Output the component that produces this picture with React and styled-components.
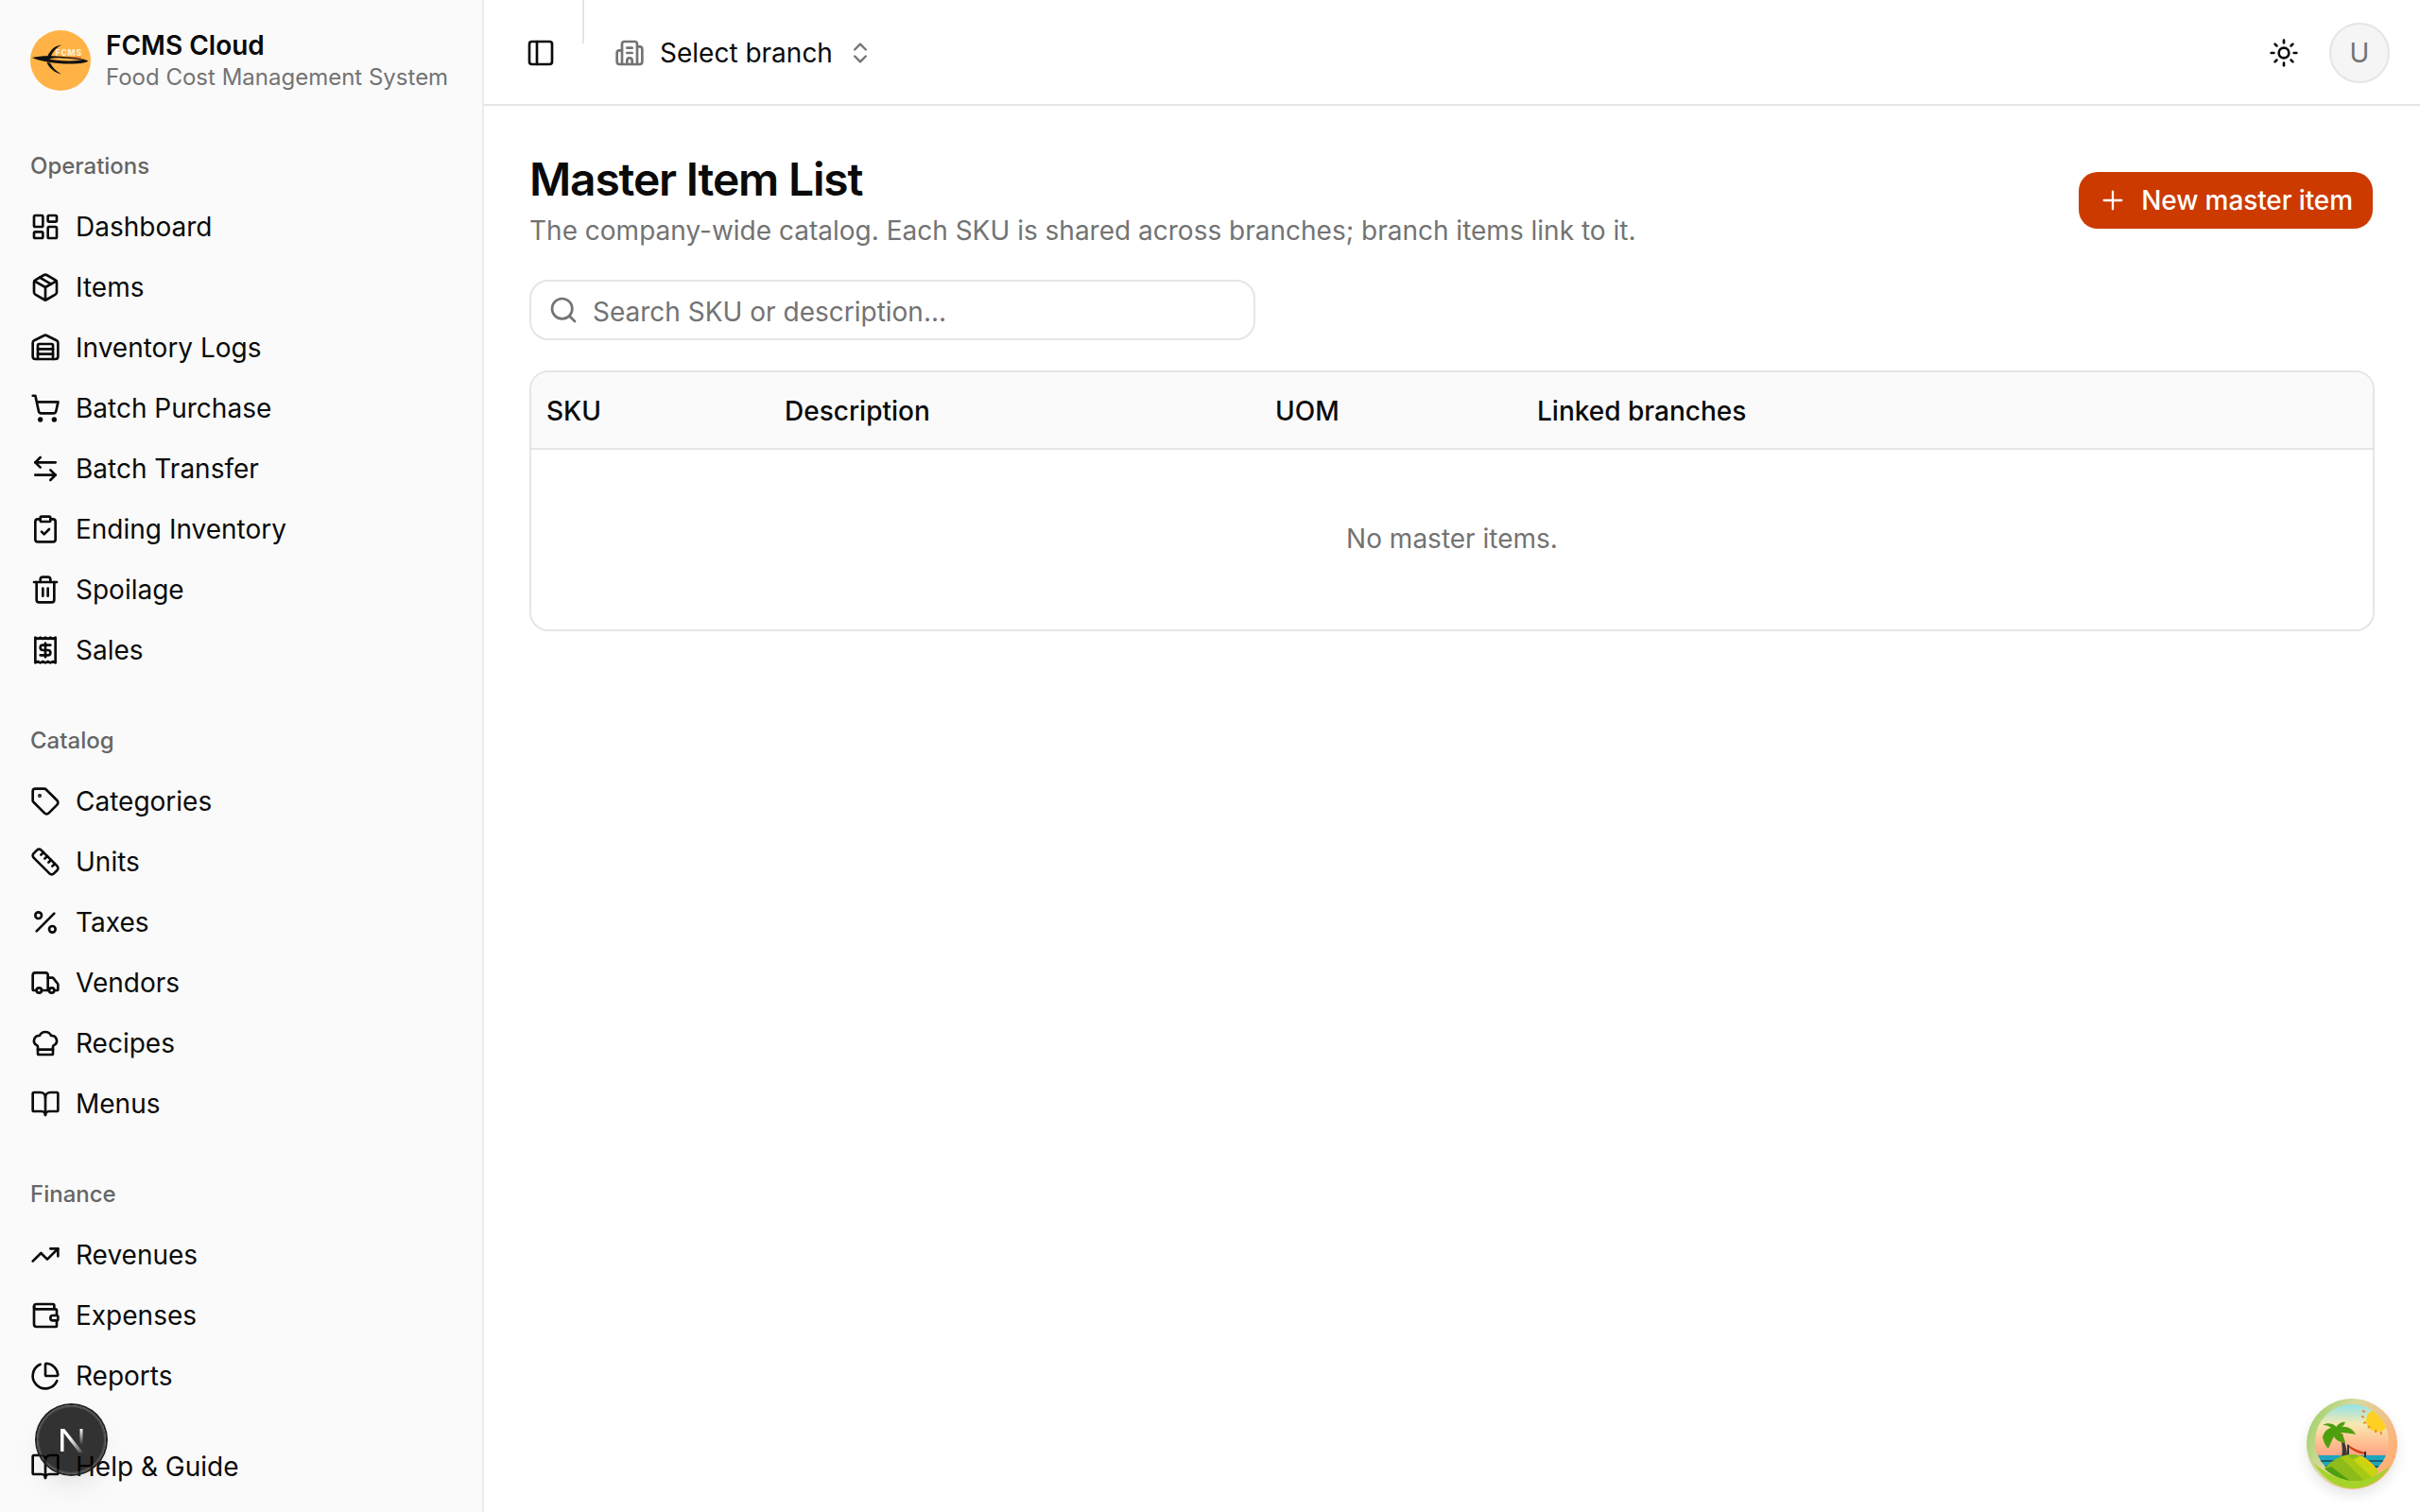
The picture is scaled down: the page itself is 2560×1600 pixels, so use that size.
import React from "react";
import styled, { createGlobalStyle } from "styled-components";
import {
  LayoutDashboard,
  Package,
  Warehouse,
  ShoppingCart,
  ArrowLeftRight,
  ClipboardCheck,
  Trash2,
  Receipt,
  Tag,
  Ruler,
  Percent,
  Truck,
  ChefHat,
  BookOpen,
  TrendingUp,
  Wallet,
  ChartPie,
  PanelLeft,
  Building2,
  ChevronsUpDown,
  Sun,
  Search,
  Plus,
} from "lucide-react";

const GlobalStyle = createGlobalStyle`
  html, body {
    margin: 0;
    padding: 0;
    background: #fff;
    color: #0a0a0a;
    font-family: Inter, "Liberation Sans", sans-serif;
  }
  * { box-sizing: border-box; }
`;

const Shell = styled.div`
  display: flex;
  width: 2560px;
  height: 1600px;
  overflow: hidden;
`;

const Sidebar = styled.aside`
  display: flex;
  flex-direction: column;
  width: 512px;
  height: 100%;
  background: #fafafa;
  border-right: 2px solid #ececec;
`;

const Brand = styled.div`
  display: flex;
  align-items: center;
  gap: 16px;
  height: 128px;
  padding: 0 32px;
`;

const BrandText = styled.div`
  display: flex;
  flex-direction: column;
`;

const BrandName = styled.span`
  font-size: 28px;
  line-height: 34px;
  font-weight: 600;
`;

const BrandSub = styled.span`
  margin-top: 1px;
  margin-bottom: -1px;
  font-size: 24px;
  line-height: 32px;
  color: #737373;
  white-space: nowrap;
`;

const Nav = styled.nav`
  display: flex;
  flex-direction: column;
  gap: 32px;
  flex: 1;
  padding-top: 16px;
`;

const Group = styled.div`
  display: flex;
  flex-direction: column;
`;

const GroupLabel = styled.div`
  height: 64px;
  padding: 0 32px;
  font-size: 24px;
  line-height: 64px;
  font-weight: 500;
  color: #666;
`;

const NavItem = styled.a`
  display: flex;
  align-items: center;
  gap: 16px;
  height: 64px;
  padding: 0 32px;
  font-size: 28px;
  color: #0a0a0a;
  white-space: nowrap;
`;

const SidebarFooter = styled.div`
  padding-bottom: 16px;
`;

const Main = styled.div`
  flex: 1;
  min-width: 0;
  display: flex;
  flex-direction: column;
`;

const Header = styled.header`
  display: flex;
  align-items: center;
  height: 112px;
  padding: 2px 32px 0 28px;
  border-bottom: 2px solid #e5e5e5;
`;

const IconButton = styled.button`
  display: flex;
  align-items: center;
  justify-content: center;
  width: 64px;
  height: 64px;
  padding: 0;
  border: 0;
  background: transparent;
  color: #0a0a0a;
`;

const HeaderDivider = styled.div`
  align-self: flex-start;
  width: 2px;
  height: 46px;
  margin: -2px 32px 0 12px;
  background: #e5e5e5;
`;

const BranchSelect = styled.button`
  display: flex;
  align-items: center;
  gap: 16px;
  padding: 0;
  border: 0;
  background: transparent;
  font: inherit;
  font-size: 28px;
  color: #0a0a0a;
  svg {
    color: #737373;
  }
  svg:last-child {
    margin-left: -1px;
  }
`;

const HeaderRight = styled.div`
  display: flex;
  align-items: center;
  gap: 16px;
  margin-left: auto;
`;

const Avatar = styled.div`
  display: flex;
  align-items: center;
  justify-content: center;
  width: 64px;
  height: 64px;
  border: 2px solid #e5e5e5;
  border-radius: 50%;
  background: #f5f5f5;
  font-size: 28px;
  color: #737373;
`;

const Content = styled.main`
  display: flex;
  flex-direction: column;
  gap: 32px;
  padding: 48px;
`;

const TitleRow = styled.div`
  display: flex;
  align-items: center;
  justify-content: space-between;
`;

const Title = styled.h1`
  margin: 0 0 4px;
  font-size: 48px;
  line-height: 60px;
  font-weight: 600;
  letter-spacing: -1.2px;
  color: #0a0a0a;
`;

const Subtitle = styled.p`
  margin: 0;
  font-size: 28px;
  line-height: 40px;
  color: #737373;
`;

const PrimaryButton = styled.button`
  display: flex;
  align-items: center;
  gap: 14px;
  height: 60px;
  margin-right: 2px;
  padding: 0 21px 0 20px;
  border: 0;
  border-radius: 20px;
  background: #cc3a00;
  color: #fff;
  font: inherit;
  font-size: 28px;
  font-weight: 500;
  letter-spacing: -0.1px;
`;

const SearchBox = styled.label`
  display: flex;
  align-items: center;
  gap: 15px;
  width: 768px;
  height: 64px;
  padding: 0 18px;
  border: 2px solid #e5e5e5;
  border-radius: 20px;
  background: #fff;
  color: #737373;
`;

const SearchInput = styled.input`
  flex: 1;
  min-width: 0;
  padding: 4px 0 0;
  border: 0;
  outline: 0;
  background: transparent;
  font: inherit;
  font-size: 28px;
  &::placeholder {
    color: #737373;
    opacity: 1;
  }
`;

const TableWrap = styled.div`
  width: 1952px;
  border: 2px solid #e5e5e5;
  border-radius: 20px;
  overflow: hidden;
`;

const Table = styled.table`
  width: 100%;
  border-collapse: collapse;
  table-layout: fixed;
`;

const HeadRow = styled.tr`
  height: 81px;
  background: #fafafa;
  border-bottom: 2px solid #e5e5e5;
`;

const HeadCell = styled.th`
  width: ${(props) => props.$width || "auto"};
  padding: 1px 16px 0;
  text-align: left;
  font-size: 28px;
  font-weight: 500;
  color: #0a0a0a;
`;

const EmptyCell = styled.td`
  height: 191px;
  padding: 0 0 3px;
  text-align: center;
  font-size: 28px;
  color: #737373;
`;

/* the dev indicator lets the sidebar show through, as in the reference */
const NextBadge = styled.div`
  position: fixed;
  left: 39px;
  top: 1487px;
  display: flex;
  align-items: center;
  justify-content: center;
  width: 73px;
  height: 73px;
  border-radius: 50%;
  background: rgba(0, 0, 0, 0.8);
  box-shadow: 0 0 0 2px #222, inset 0 0 0 2px rgba(255, 255, 255, 0.14), 0 16px 32px -8px rgba(0, 0, 0, 0.12);
`;

const Sticker = styled.div`
  position: fixed;
  left: 2440px;
  top: 1480px;
  width: 96px;
  height: 96px;
  border-radius: 50%;
  box-shadow: 0 6px 14px rgba(0, 0, 0, 0.1);
`;

const operations = [
  [LayoutDashboard, "Dashboard"],
  [Package, "Items"],
  [Warehouse, "Inventory Logs"],
  [ShoppingCart, "Batch Purchase"],
  [ArrowLeftRight, "Batch Transfer"],
  [ClipboardCheck, "Ending Inventory"],
  [Trash2, "Spoilage"],
  [Receipt, "Sales"],
];

const catalog = [
  [Tag, "Categories"],
  [Ruler, "Units"],
  [Percent, "Taxes"],
  [Truck, "Vendors"],
  [ChefHat, "Recipes"],
  [BookOpen, "Menus"],
];

const finance = [
  [TrendingUp, "Revenues"],
  [Wallet, "Expenses"],
  [ChartPie, "Reports"],
];

const groups = [
  ["Operations", operations],
  ["Catalog", catalog],
  ["Finance", finance],
];

function BrandLogo() {
  return (
    <svg width="64" height="64" viewBox="0 0 64 64" style={{ flex: "none" }}>
      <circle cx="32" cy="32" r="32" fill="#ffb347" />
      <text
        x="26.5"
        y="26.800"
        fontFamily="Inter, sans-serif"
        fontSize="8.500"
        fontWeight="800"
        letterSpacing="0.9"
        fill="#ffedcf"
      >
        FCMS
      </text>
      <path d="M27 28.800h27" stroke="#d9622a" strokeWidth="1.200" />
      <path d="M2 29c10-2.600 22-2 35-.8 9 .8 19 1.800 24 4 .6 1.600-8 3.600-20 3.400C26 35.400 11 33 2 29Z" fill="#111" />
      <path d="M20 30.800c5 .9 12 1.500 20 1.600 7 .1 12-.2 15-.8-6-1.200-14-1.900-22-2.200-5-.2-9 0-13 1.400Z" fill="#ffb347" />
      <path d="M33.500 15.500c-7.500.6-12.500 5.500-15.500 12.500l3.500.2c2.500-5.500 6-10 12-12.700Z" fill="#111" />
      <path d="M17.500 34c2.500 6 8 10.800 15.500 12.500-5.500-3-9.500-7-12-12Z" fill="#111" />
    </svg>
  );
}

function NextMark() {
  return (
    <svg width="32" height="30" viewBox="0 0 32 30" fill="none">
      <defs>
        <linearGradient id="nextFade" x1="0" y1="0" x2="0" y2="1">
          <stop offset="0" stopColor="#fff" />
          <stop offset="0.8" stopColor="#fff" stopOpacity="0" />
        </linearGradient>
        <linearGradient id="nextDiag" x1="0" y1="0" x2="1" y2="1">
          <stop offset="0.4" stopColor="#fff" />
          <stop offset="1" stopColor="#fff" stopOpacity="0.1" />
        </linearGradient>
      </defs>
      <path d="M4 3h3.500v24H4z" fill="#fff" />
      <path d="M4 3h4.200L28 28h-4.600Z" fill="url(#nextDiag)" />
      <path d="M24.500 3h3v21h-3z" fill="url(#nextFade)" />
    </svg>
  );
}

function BeachSticker() {
  return (
    <svg width="96" height="96" viewBox="0 0 96 96">
      <defs>
        <linearGradient id="ring" x1="0" y1="0" x2="1" y2="0.5">
          <stop offset="0" stopColor="#8fd05a" />
          <stop offset="0.45" stopColor="#d9d9a0" />
          <stop offset="1" stopColor="#ffb077" />
        </linearGradient>
        <linearGradient id="sky" x1="0" y1="0" x2="0" y2="1">
          <stop offset="0.06" stopColor="#8fe3ea" />
          <stop offset="0.28" stopColor="#f7e9b0" />
          <stop offset="0.5" stopColor="#ffbc8f" />
          <stop offset="0.7" stopColor="#ff9684" />
        </linearGradient>
        <clipPath id="inner">
          <circle cx="48" cy="45" r="39" />
        </clipPath>
        <clipPath id="hill">
          <path d="M19 74c8-9 18-15 29-15 11 0 20 7 28 18-6 7-16 11-27 10-12-1-23-6-30-13Z" />
        </clipPath>
      </defs>
      <circle cx="48" cy="48" r="48" fill="url(#ring)" />
      <path d="M8 68c8 16 24 27 41 27 17 0 32-10 40-25-10 10-24 16-40 16-16 0-31-8-41-18Z" fill="#a6d32a" />
      <g clipPath="url(#inner)">
        <rect x="0" y="0" width="96" height="96" fill="url(#sky)" />
        <circle cx="75" cy="23" r="12" fill="#ffcf24" />
        <path d="M59 13l3 1M58 19l3 .6M60 26l3-1M65 31l2-2M73 36l.5-3M79 38l-.5-3" stroke="#e88a3c" strokeWidth="2" />
        <rect x="8" y="60" width="80" height="16" fill="#1da6bd" />
        <path d="M10 66h76M12 72h72" stroke="#1b4a5a" strokeWidth="1.500" />
      </g>
      <path d="M34 37l3 10 3-1-2-9Z" fill="#d2441a" />
      <path d="M37 47c1 5 1 10 0 15h6c0-6-1-11-3-16Z" fill="#3a3a3a" />
      <path d="M43 48c5 4 11 7 19 9l-1 2c-7-1-13-4-18-9Z" fill="#d2441a" />
      <path d="M44 49v12M62 56v6" stroke="#333" strokeWidth="2" />
      <path d="M36 35c-5-8-12-11-19-7 4 0 7 1 9 3-5 1-8 5-9 10 1 4 2 8 6 12 2-5 4-9 6-13 2 4 6 6 12 7-1-5-3-9-5-11 6 0 12 1 16 2-3-6-9-9-15-8 2-1 3-3 4-5-5-1-9 3-11 8Z" fill="#4e9f0f" />
      <g clipPath="url(#hill)">
        <rect x="14" y="56" width="70" height="34" fill="#8dbb19" />
        <path d="M62 58l20 18-10 14-26-24Z" fill="#c9d60f" />
        <path d="M50 56h16l14 12-8 6Z" fill="#f5c800" />
        <path d="M14 76l12-4 24 18H14Z" fill="#4e9f0f" />
        <path d="M36 62l8-2 26 24-8 4Z" fill="#a6c913" />
      </g>
    </svg>
  );
}

export default function App() {
  return (
    <Shell>
      <GlobalStyle />
      <Sidebar>
        <Brand>
          <BrandLogo />
          <BrandText>
            <BrandName>FCMS Cloud</BrandName>
            <BrandSub>Food Cost Management System</BrandSub>
          </BrandText>
        </Brand>
        <Nav>
          {groups.map(([label, items]) => (
            <Group key={label}>
              <GroupLabel>{label}</GroupLabel>
              {items.map(([Icon, name]) => (
                <NavItem key={name}>
                  <Icon size={32} />
                  {name}
                </NavItem>
              ))}
            </Group>
          ))}
        </Nav>
        <SidebarFooter>
          <NavItem>
            <BookOpen size={32} />
            Help &amp; Guide
          </NavItem>
        </SidebarFooter>
      </Sidebar>

      <Main>
        <Header>
          <IconButton>
            <PanelLeft size={32} />
          </IconButton>
          <HeaderDivider />
          <BranchSelect>
            <Building2 size={32} />
            Select branch
            <ChevronsUpDown size={28} />
          </BranchSelect>
          <HeaderRight>
            <IconButton>
              <Sun size={32} />
            </IconButton>
            <Avatar>U</Avatar>
          </HeaderRight>
        </Header>

        <Content>
          <TitleRow>
            <div>
              <Title>Master Item List</Title>
              <Subtitle>
                The company-wide catalog. Each SKU is shared across branches; branch items link to it.
              </Subtitle>
            </div>
            <PrimaryButton>
              <Plus size={32} strokeWidth={1.7} />
              New master item
            </PrimaryButton>
          </TitleRow>

          <SearchBox>
            <Search size={32} />
            <SearchInput placeholder="Search SKU or description..." />
          </SearchBox>

          <TableWrap>
            <Table>
              <thead>
                <HeadRow>
                  <HeadCell $width="252px">SKU</HeadCell>
                  <HeadCell $width="519px">Description</HeadCell>
                  <HeadCell $width="277px">UOM</HeadCell>
                  <HeadCell>Linked branches</HeadCell>
                </HeadRow>
              </thead>
              <tbody>
                <tr>
                  <EmptyCell colSpan={4}>No master items.</EmptyCell>
                </tr>
              </tbody>
            </Table>
          </TableWrap>
        </Content>
      </Main>

      <NextBadge>
        <NextMark />
      </NextBadge>
      <Sticker>
        <BeachSticker />
      </Sticker>
    </Shell>
  );
}
